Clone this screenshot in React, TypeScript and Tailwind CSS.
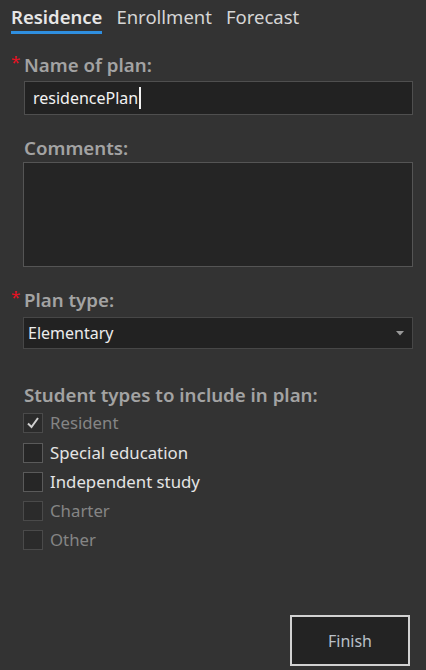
import React from "react";

type Student = { label: string; checked?: boolean; disabled?: boolean };

const students: Student[] = [
	{ label: "Resident", checked: true, disabled: true },
	{ label: "Special education" },
	{ label: "Independent study" },
	{ label: "Charter", disabled: true },
	{ label: "Other", disabled: true },
];

function FieldLabel({ text, required }: { text: string; required?: boolean }) {
	return (
		<div className="flex h-[24px] items-center pl-[11px]">
			<span className="w-[13px] self-start pt-[1px] text-[17px] leading-[16px] text-[#e81123]">
				{required ? "*" : ""}
			</span>
			<span className="text-[18.7px] font-semibold leading-[24px] text-[#a3a3a3]">
				{text}
			</span>
		</div>
	);
}

function Checkbox({ s }: { s: Student }) {
	return (
		<div className="flex h-[20px] items-center pl-[23px]">
			<span
				className={`flex h-[20px] w-[20px] items-center justify-center border ${
					s.disabled ? "border-[#4a4a4a] bg-[#2b2b2b]" : "border-[#5a5a5a] bg-[#262626]"
				}`}
			>
				{s.checked && (
					<svg width="14" height="14" viewBox="0 0 14 14" aria-hidden>
						<path
							d="M2 7.5 L5.5 11 L12 2"
							fill="none"
							stroke="#cfcfcf"
							strokeWidth="2"
						/>
					</svg>
				)}
			</span>
			<span
				className={`ml-[7px] text-[16.8px] leading-[20px] ${
					s.disabled ? "text-[#858585]" : "text-[#e4e4e4]"
				}`}
			>
				{s.label}
			</span>
		</div>
	);
}

export default function App() {
	return (
		<div className="flex h-[670px] w-[426px] flex-col bg-[#333333] font-['Noto_Sans',sans-serif]">
			{/* Tabs */}
			<div className="flex gap-[14px] pl-[11px] pt-[5px]">
				<div className="flex flex-col border-b-[3px] border-[#2f8fe0] pb-[2px]">
					<span className="text-[18.5px] font-semibold leading-[24px] text-[#e6e6e6]">Residence</span>
				</div>
				<span className="text-[18.5px] leading-[24px] text-[#d6d6d6]">Enrollment</span>
				<span className="text-[18.5px] leading-[24px] text-[#d6d6d6]">Forecast</span>
			</div>

			<div className="mt-[19px]">
				<FieldLabel text="Name of plan:" required />
			</div>
			<div className="ml-[24px] mt-[4px] flex h-[34px] w-[389px] items-center border border-[#4f4f4f] bg-[#222222] pl-[8px]">
				<span className="text-[16px] leading-[20px] text-[#f2f2f2]">residencePlan</span>
				<span className="ml-[1px] h-[22px] w-[2px] bg-[#f2f2f2]" />
			</div>

			<div className="mt-[21px]">
				<FieldLabel text="Comments:" />
			</div>
			<div className="ml-[23px] mt-[2px] h-[105px] w-[390px] border border-[#555555] bg-[#252525]" />

			<div className="mt-[21px]">
				<FieldLabel text="Plan type:" required />
			</div>
			<div className="ml-[23px] mt-[5px] flex h-[32px] w-[390px] items-center justify-between border border-[#474747] bg-[#222222] pl-[4px] pr-[8px]">
				<span className="text-[16px] leading-[20px] text-[#ececec]">Elementary</span>
				<svg width="8" height="5" viewBox="0 0 8 5" aria-hidden>
					<path d="M0 0 H8 L4 4.5 Z" fill="#9a9a9a" />
				</svg>
			</div>

			<div className="mt-[34px]">
				<FieldLabel text="Student types to include in plan:" />
			</div>
			<div className="mt-[6px] flex flex-col gap-[9px]">
				{students.map((s, i) => (
					<div key={s.label} className={i === 0 ? "mb-[1px]" : ""}>
						<Checkbox s={s} />
					</div>
				))}
			</div>

			<div className="mt-auto flex justify-end pb-[4px] pr-[16px]">
				<button className="h-[51px] w-[120px] border-2 border-[#d2d2d2] bg-[#232323] text-[16px] text-[#b9c0c8]">
					Finish
				</button>
			</div>
		</div>
	);
}
